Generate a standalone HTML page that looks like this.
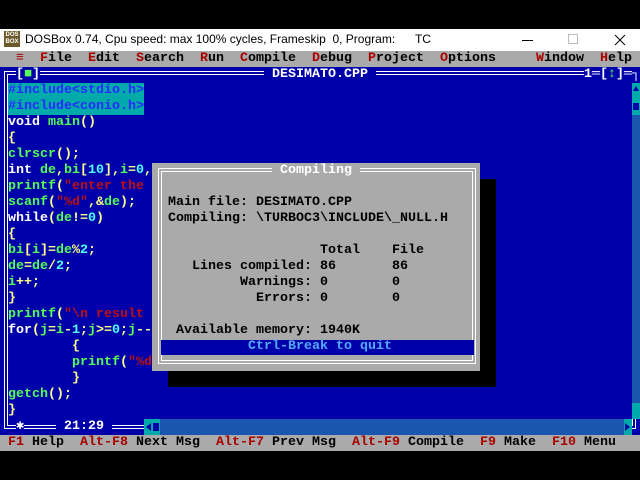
<!DOCTYPE html>
<html><head><meta charset="utf-8"><style>
*{margin:0;padding:0;box-sizing:border-box}
body{width:640px;height:480px;background:#000;position:relative;overflow:hidden;font-family:"Liberation Mono",monospace}
.r{position:absolute;white-space:pre;font-family:"Liberation Mono",monospace;font-weight:bold;font-size:13.33px;line-height:16px;height:16px}
.k{color:#fff}.i{color:#55ff55}.n{color:#55ffff}.s{color:#bb1111}.p{color:#ffff88}
.red{color:#aa0000}
.chk{background:#1a55b0}
</style></head><body>
<!-- title bar -->
<div style="position:absolute;left:0;top:29px;width:640px;height:22px;background:#fff"></div>
<div style="position:absolute;left:4px;top:31px;width:16px;height:16px;background:#6b5a2a;color:#fff;font:bold 6px 'Liberation Sans';line-height:7px;text-align:center;padding-top:1px">DOS<br>BOX</div>
<div style="position:absolute;left:25px;top:32px;font:12px 'Liberation Sans',sans-serif;color:#000;white-space:pre">DOSBox 0.74, Cpu speed: max 100% cycles, Frameskip  0, Program:      TC</div>
<div style="position:absolute;left:522px;top:40px;width:11px;height:1px;background:#000"></div>
<div style="position:absolute;left:568px;top:34px;width:10px;height:10px;border:1px solid #bbb"></div>
<svg style="position:absolute;left:614px;top:34px" width="12" height="12"><path d="M1 1L11 11M11 1L1 11" stroke="#000" stroke-width="1"/></svg>
<!-- menu -->
<div style="position:absolute;left:0;top:51px;width:640px;height:16px;background:#aaa"></div>
<div class="r" style="left:0;top:51px;color:#000">  <span class="red">≡</span>  <span class="red">F</span>ile  <span class="red">E</span>dit  <span class="red">S</span>earch  <span class="red">R</span>un  <span class="red">C</span>ompile  <span class="red">D</span>ebug  <span class="red">P</span>roject  <span class="red">O</span>ptions     <span class="red">W</span>indow  <span class="red">H</span>elp</div>
<!-- editor -->
<div style="position:absolute;left:0;top:67px;width:640px;height:368px;background:#0000aa"></div>
<div style="position:absolute;left:4px;top:71px;width:632px;height:358px;border:4px double #fff"></div>
<div class="r" style="left:16px;top:67px;background:#0000aa;color:#fff">[<span style="color:#55ff55">■</span>]</div>
<div class="r" style="left:264px;top:67px;background:#0000aa;color:#fff"> DESIMATO.CPP </div>
<div class="r" style="left:584px;top:67px;background:#0000aa;color:#fff">1═[<span style="color:#55ff55">↕</span>]═┐</div>
<!-- vertical scrollbar -->
<div class="chk" style="position:absolute;left:632px;top:83px;width:8px;height:336px"></div>
<div style="position:absolute;left:632px;top:83px;width:8px;height:16px;background:#00aaaa"></div>
<div style="position:absolute;left:633px;top:86px;width:0;height:0;border-left:3px solid transparent;border-right:3px solid transparent;border-bottom:5px solid #0000aa"></div>
<div style="position:absolute;left:632px;top:99px;width:8px;height:16px;background:#00aaaa"></div>
<div style="position:absolute;left:633px;top:103px;width:6px;height:7px;background:#0000aa"></div>
<div style="position:absolute;left:632px;top:403px;width:8px;height:16px;background:#00aaaa"></div>
<!-- code -->
<div style="position:absolute;left:8px;top:83px;width:136px;height:32px;background:#00aaaa"></div>
<div class="r" style="left:8px;top:83px;color:#2a2aff">#include&lt;stdio.h&gt;</div>
<div class="r" style="left:8px;top:99px;color:#2a2aff">#include&lt;conio.h&gt;</div>
<div class="r" style="left:8px;top:115px"><span class="k">void</span> <span class="i">main</span><span class="p">()</span></div>
<div class="r" style="left:8px;top:131px"><span class="p">{</span></div>
<div class="r" style="left:8px;top:147px"><span class="i">clrscr</span><span class="p">();</span></div>
<div class="r" style="left:8px;top:163px"><span class="k">int</span> <span class="i">de</span><span class="p">,</span><span class="i">bi</span><span class="p">[</span><span class="n">10</span><span class="p">],</span><span class="i">i</span><span class="p">=</span><span class="n">0</span><span class="p">,</span></div>
<div class="r" style="left:8px;top:179px"><span class="i">printf</span><span class="p">(</span><span class="s">"enter the</span></div>
<div class="r" style="left:8px;top:195px"><span class="i">scanf</span><span class="p">(</span><span class="s">"%d"</span><span class="p">,&amp;</span><span class="i">de</span><span class="p">);</span></div>
<div class="r" style="left:8px;top:211px"><span class="k">while</span><span class="p">(</span><span class="i">de</span><span class="p">!=</span><span class="n">0</span><span class="p">)</span></div>
<div class="r" style="left:8px;top:227px"><span class="p">{</span></div>
<div class="r" style="left:8px;top:243px"><span class="i">bi</span><span class="p">[</span><span class="i">i</span><span class="p">]=</span><span class="i">de</span><span class="p">%</span><span class="n">2</span><span class="p">;</span></div>
<div class="r" style="left:8px;top:259px"><span class="i">de</span><span class="p">=</span><span class="i">de</span><span class="p">/</span><span class="n">2</span><span class="p">;</span></div>
<div class="r" style="left:8px;top:275px"><span class="i">i</span><span class="p">++;</span></div>
<div class="r" style="left:8px;top:291px"><span class="p">}</span></div>
<div class="r" style="left:8px;top:307px"><span class="i">printf</span><span class="p">(</span><span class="s">"\n result</span></div>
<div class="r" style="left:8px;top:323px"><span class="k">for</span><span class="p">(</span><span class="i">j</span><span class="p">=</span><span class="i">i</span><span class="p">-</span><span class="n">1</span><span class="p">;</span><span class="i">j</span><span class="p">&gt;=</span><span class="n">0</span><span class="p">;</span><span class="i">j</span><span class="p">--</span></div>
<div class="r" style="left:72px;top:339px"><span class="p">{</span></div>
<div class="r" style="left:72px;top:355px"><span class="i">printf</span><span class="p">(</span><span class="s">"%d</span></div>
<div class="r" style="left:72px;top:371px"><span class="p">}</span></div>
<div class="r" style="left:8px;top:387px"><span class="i">getch</span><span class="p">();</span></div>
<div class="r" style="left:8px;top:403px"><span class="p">}</span></div>
<!-- bottom row -->
<div class="r" style="left:16px;top:419px;background:#0000aa;color:#fff">✱</div>
<div class="r" style="left:56px;top:419px;background:#0000aa;color:#fff"> 21:29 </div>
<div class="chk" style="position:absolute;left:144px;top:419px;width:488px;height:16px"></div>
<div style="position:absolute;left:144px;top:419px;width:16px;height:16px;background:#00aaaa"></div>
<div style="position:absolute;left:146px;top:423px;width:0;height:0;border-top:4px solid transparent;border-bottom:4px solid transparent;border-right:5px solid #0000aa"></div>
<div style="position:absolute;left:153px;top:423px;width:6px;height:8px;background:#0000aa"></div>
<div style="position:absolute;left:624px;top:419px;width:8px;height:16px;background:#00aaaa"></div>
<div style="position:absolute;left:625px;top:423px;width:0;height:0;border-top:4px solid transparent;border-bottom:4px solid transparent;border-left:5px solid #0000aa"></div>
<!-- status -->
<div style="position:absolute;left:0;top:435px;width:640px;height:16px;background:#aaa"></div>
<div class="r" style="left:0;top:435px;color:#000"> <span class="red">F1</span> Help  <span class="red">Alt-F8</span> Next Msg  <span class="red">Alt-F7</span> Prev Msg  <span class="red">Alt-F9</span> Compile  <span class="red">F9</span> Make  <span class="red">F10</span> Menu</div>
<!-- dialog -->
<div style="position:absolute;left:168px;top:179px;width:328px;height:208px;background:#000"></div>
<div style="position:absolute;left:152px;top:163px;width:328px;height:208px;background:#aaa"></div>
<div style="position:absolute;left:158px;top:168px;width:318px;height:196px;border:4px double #fff"></div>
<div class="r" style="left:272px;top:163px;background:#aaa;color:#fff"> Compiling </div>
<div class="r" style="left:168px;top:195px;color:#000">Main file: DESIMATO.CPP</div>
<div class="r" style="left:168px;top:211px;color:#000">Compiling: \TURBOC3\INCLUDE\_NULL.H</div>
<div class="r" style="left:320px;top:243px;color:#000">Total    File</div>
<div class="r" style="left:192px;top:259px;color:#000">Lines compiled: 86       86</div>
<div class="r" style="left:240px;top:275px;color:#000">Warnings: 0        0</div>
<div class="r" style="left:256px;top:291px;color:#000">Errors: 0        0</div>
<div class="r" style="left:176px;top:323px;color:#000">Available memory: 1940K</div>
<div style="position:absolute;left:161px;top:340px;width:313px;height:15px;background:#0000aa"></div>
<div class="r" style="left:248px;top:339px;color:#55aaff">Ctrl-Break to quit</div>
</body></html>
